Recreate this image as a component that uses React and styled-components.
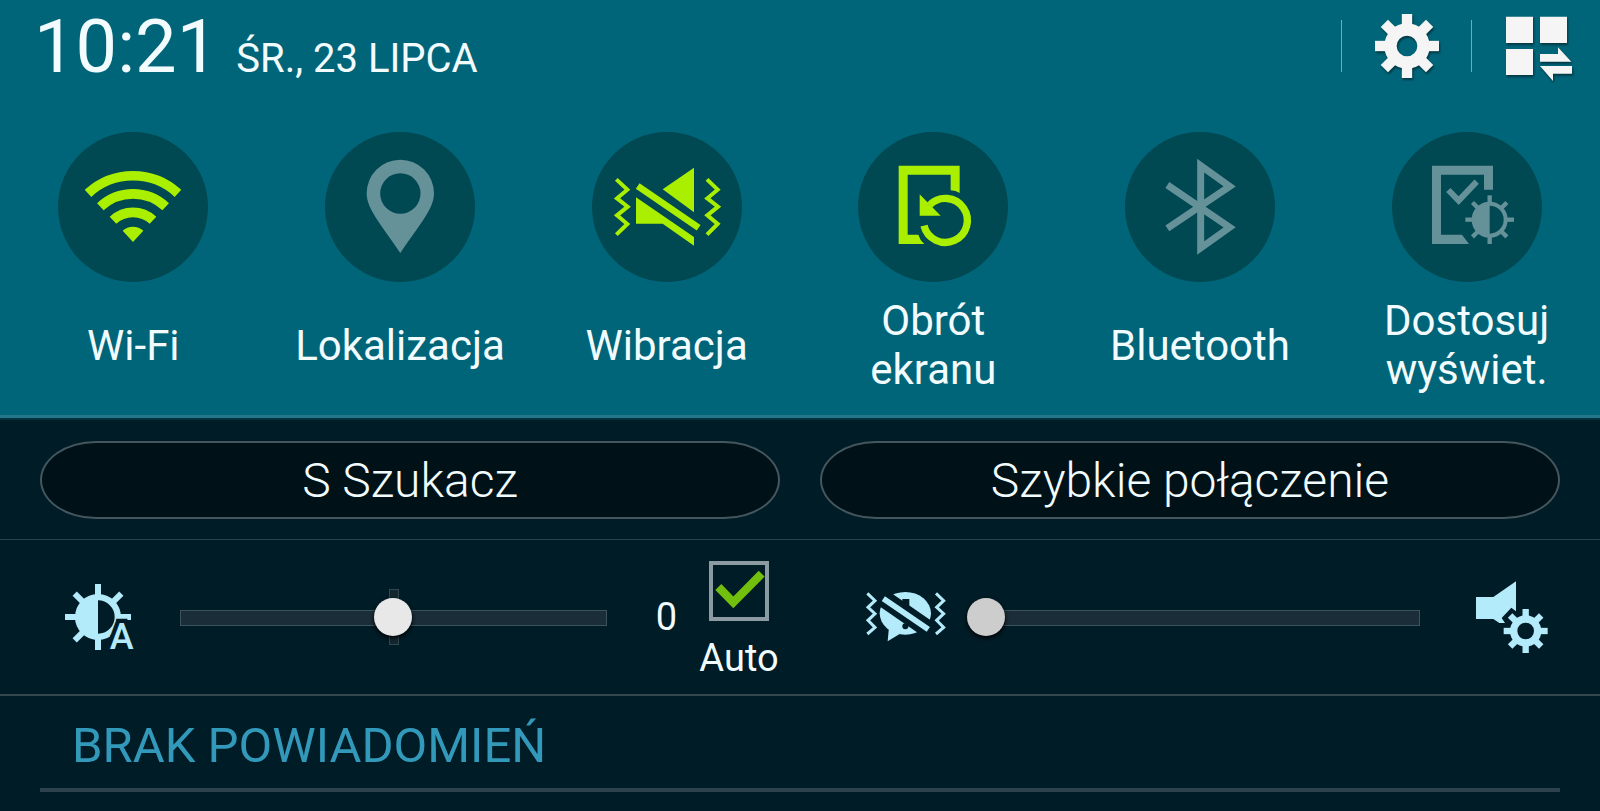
import React, { useState } from "react";
import styled, { createGlobalStyle } from "styled-components";

const GlobalStyle = createGlobalStyle`
  * {
    box-sizing: border-box;
  }
  body {
    margin: 0;
    background: #001c27;
    font-family: Roboto, "Noto Sans", sans-serif;
    color: #f2fbfd;
  }
  button {
    padding: 0;
    border: 0;
    background: none;
    color: inherit;
    font: inherit;
    cursor: pointer;
  }
  svg {
    display: block;
    overflow: visible;
  }
`;

const TopPanel = styled.section`
  background: #006579;
  border-bottom: 3px solid #25788a;
`;

const Header = styled.header`
  display: flex;
  align-items: center;
  height: 92px;
  padding: 0 29px 0 34px;
`;

const Clock = styled.div`
  display: flex;
  flex: 1;
  align-items: baseline;
  gap: 18px;
`;

const Time = styled.time`
  font-size: 74px;
`;

const DateText = styled.span`
  font-size: 40px;
`;

const HeaderButton = styled.button`
  display: flex;
  justify-content: center;
  align-items: center;
  width: ${(props) => (props.$last ? "100px" : "130px")};
  height: 52px;
  padding-left: ${(props) => (props.$last ? "34px" : "0")};
  border-left: 1px solid #7aa9b3;

  svg {
    flex-shrink: 0;
    fill: #f5f5f5;
    filter: drop-shadow(1px 2px 1px rgba(0, 0, 0, 0.45));
  }
`;

const Tiles = styled.div`
  display: grid;
  grid-template-columns: repeat(6, 1fr);
  padding: 40px 0 21px;
`;

const Tile = styled.button`
  display: flex;
  flex-direction: column;
  align-items: center;
  gap: 14px;
`;

const TileIcon = styled.span`
  width: 150px;
  height: 150px;
  border-radius: 50%;
  background: #004852;
  color: ${(props) => (props.$on ? "#aaee00" : "#659199")};
`;

const TileLabel = styled.span`
  display: flex;
  align-items: center;
  max-width: 220px;
  height: 98px;
  font-size: 42px;
  line-height: 49px;
  text-align: center;
`;

const Shortcuts = styled.section`
  display: grid;
  grid-template-columns: 1fr 1fr;
  gap: 40px;
  padding: 21px 40px 20px;
  border-top: 2px solid #00333f;
  border-bottom: 1px solid #2b434c;
`;

const Shortcut = styled.button`
  && {
    height: 78px;
    border: 2px solid #44575e;
    border-radius: 56px / 39px;
    background: #001218;
    font-size: 48px;
    font-weight: 300;
  }
`;

const Controls = styled.section`
  display: grid;
  grid-template-columns: 1fr 1fr;
  min-height: 154px;
`;

const Control = styled.div`
  display: flex;
  align-items: center;
  color: #b4ebfb;

  svg {
    flex-shrink: 0;
  }
`;

const Brightness = styled(Control)`
  padding: 0 13px 0 65px;
`;

const Volume = styled(Control)`
  padding: 0 52px 0 66px;
`;

const SliderBox = styled.div`
  position: relative;
  flex: 1;
  display: flex;
  align-items: center;
  height: 54px;
  margin: ${(props) => props.$margin};

  /* centre tick */
  &::before {
    content: "";
    display: ${(props) => (props.$tick ? "block" : "none")};
    position: absolute;
    left: calc(50% - 4px);
    width: 8px;
    height: 54px;
    border: 1px solid #30474f;
    background: #14272f;
  }

  /* track */
  &::after {
    content: "";
    position: absolute;
    top: 20px;
    right: 0;
    left: ${(props) => (props.$tick ? "0" : "19px")};
    height: 14px;
    border: 1px solid #3b545b;
    background: #1b2d38;
  }
`;

const Slider = styled.input`
  appearance: none;
  position: relative;
  z-index: 1;
  width: 100%;
  height: 38px;
  margin: 0;
  background: transparent;

  &::-webkit-slider-thumb {
    appearance: none;
    width: 38px;
    height: 38px;
    border-radius: 50%;
    background: ${(props) => props.$thumb};
    box-shadow: 0 2px 4px #000;
  }
`;

const Level = styled.output`
  margin-right: 14px;
  color: #f2fbfd;
  font-size: 38px;
`;

const AutoField = styled.label`
  display: flex;
  flex-direction: column;
  align-items: center;
  gap: 18px;
  width: 96px;
  padding-top: 3px;
  color: #f2fbfd;
  font-size: 38px;
  line-height: 38px;
`;

const CheckStack = styled.span`
  display: grid;

  > * {
    grid-area: 1 / 1;
  }
  svg {
    pointer-events: none;
  }
`;

const Checkbox = styled.input`
  appearance: none;
  width: 60px;
  height: 60px;
  margin: 0;
  border: 4px solid #8c9ba1;
`;

const Notice = styled.h2`
  margin: 0 40px;
  padding: 22px 32px 14px;
  border-bottom: 4px solid #2c424c;
  color: #3299ba;
  font-size: 49px;
  font-weight: 400;
  line-height: 56px;
`;

const Divider = styled.hr`
  height: 2px;
  margin: 0;
  border: 0;
  background: #34474f;
`;

const EIGHT = [0, 45, 90, 135, 180, 225, 270, 315];

const Gear = ({ cx, cy, outer, body, hole, tooth }) => (
  <g fill="none" stroke="currentColor">
    <circle cx={cx} cy={cy} r={(body + hole) / 2} strokeWidth={body - hole} />
    {EIGHT.map((angle) => (
      <path
        key={angle}
        d={`M${cx} ${cy - body + 6}V${cy - outer}`}
        strokeWidth={tooth}
        transform={`rotate(${angle} ${cx} ${cy})`}
      />
    ))}
  </g>
);

// Sun with the left half filled
const Sun = ({ cx, cy, outer, body, ring, ray, angles = EIGHT }) => (
  <g fill="none" stroke="currentColor">
    <circle cx={cx} cy={cy} r={body - ring / 2} strokeWidth={ring} />
    <path
      d={`M${cx} ${cy - body + 2}A${body - 2} ${body - 2} 0 0 0 ${cx} ${cy + body - 2}Z`}
      fill="currentColor"
      stroke="none"
    />
    {angles.map((angle) => (
      <path
        key={angle}
        d={`M${cx} ${cy - body + 4}V${cy - outer}`}
        strokeWidth={ray}
        transform={`rotate(${angle} ${cx} ${cy})`}
      />
    ))}
  </g>
);

const SettingsIcon = () => (
  <svg width="64" height="64" viewBox="0 0 192 192" color="#f5f5f5">
    <Gear cx={96} cy={96} outer={96} body={68} hole={31} tooth={31} />
  </svg>
);

const QuickPanelIcon = () => (
  <svg width="66" height="70" viewBox="558 33 198 210">
    <path d="M558 50h81v79h-81zM660 50h81v79h-81zM558 147h81v78h-81z" />
    <path d="M660 162H714V142L754 185H660zM660 198H756V221H699V243z" />
  </svg>
);

const WifiIcon = () => (
  <svg viewBox="54 37 450 450" fill="none" stroke="currentColor" strokeWidth="29">
    <path d="M144 221A199 199 0 0 1 414 221" />
    <path d="M181 261A144 144 0 0 1 377 261" />
    <path d="M219 302A88 88 0 0 1 339 302" />
    <path d="M248 333A46 46 0 0 1 310 333L279 367Z" fill="currentColor" stroke="none" />
  </svg>
);

const LocationIcon = () => (
  <svg viewBox="856 37 450 450" fill="currentColor" fillRule="evenodd">
    <path d="M1082 400C1020 310 981 266 981 221A101 101 0 0 1 1183 221C1183 266 1144 310 1082 400ZM1082 161A60 60 0 1 0 1082 282A60 60 0 1 0 1082 161Z" />
  </svg>
);

const VibrateIcon = () => (
  <svg viewBox="66 37 450 450" fill="currentColor">
    <path
      d="M139 179L172 210L141 236L173 261L141 287L172 313L139 345M411 179L443 210L412 236L444 261L412 287L443 313L411 345"
      fill="none"
      stroke="currentColor"
      strokeWidth="12"
    />
    <path d="M203 199L386 324" stroke="currentColor" strokeWidth="20" />
    <path d="M278 209L372 144V278ZM198 233L372 352V378L278 312H198Z" />
  </svg>
);

const RotateIcon = () => (
  <svg viewBox="865 37 450 450" fill="currentColor">
    <path d="M1170 138H987V373H1064Q1050 360 1046 345H1014V165H1143V212Q1158 213 1170 220Z" />
    <path
      d="M1063 318A66 66 0 1 0 1080 256"
      fill="none"
      stroke="currentColor"
      strokeWidth="22"
    />
    <path d="M1050 224V288H1113Z" />
  </svg>
);

const BluetoothIcon = () => (
  <svg viewBox="77 37 450 450" fill="none" stroke="currentColor" strokeWidth="21">
    <path d="M204 326L391 200L304 138V385L391 323L204 196" strokeMiterlimit="6" />
  </svg>
);

const AdaptIcon = () => (
  <svg viewBox="876 37 450 450" fill="currentColor">
    <path d="M1179 138H996V373H1107L1086 345H1023V165H1152V210H1179Z" />
    <path
      d="M1045 211L1076 243L1130 186"
      fill="none"
      stroke="currentColor"
      strokeWidth="18"
    />
    <Sun cx={1169} cy={300} outer={73} body={54} ring={12} ray={13} />
  </svg>
);

const BrightnessIcon = () => (
  <svg width="69" height="66" viewBox="195 132 207 198">
    <Sun
      cx={294}
      cy={231}
      outer={99}
      body={69}
      ring={19}
      ray={18}
      angles={[0, 45, 90, 180, 225, 270, 315]}
    />
    <text
      x="365"
      y="327"
      textAnchor="middle"
      fontSize="108"
      fontWeight="500"
      fill="currentColor"
      stroke="#001c27"
      strokeWidth="26"
      paintOrder="stroke"
    >
      A
    </text>
  </svg>
);

const NotifyVibrateIcon = () => (
  <svg width="80" height="50" viewBox="79 96 240 150">
    <g fill="currentColor">
      <ellipse cx="197" cy="160" rx="77" ry="64" />
      <path d="M148 200L144 244L180 222Z" />
    </g>
    <g fill="#001c27">
      <path d="M188 117H209V150H188Z" />
      <circle cx="197" cy="199" r="9" />
    </g>
    <path d="M118 106L285 221" stroke="#001c27" strokeWidth="53" />
    <g fill="none" stroke="currentColor">
      <path d="M131 116L266 208" strokeWidth="17" />
      <path
        d="M83 100L106 122L85 142L106 161L85 181L106 202L83 222M289 100L312 122L291 142L312 161L291 181L312 202L289 222"
        strokeWidth="9"
      />
    </g>
  </svg>
);

const SoundSettingsIcon = () => (
  <svg width="72" height="72" viewBox="288 63 216 216">
    <path
      d="M288 111H340L408 64V154L394 143L365 174L375 189H358L340 177H288Z"
      fill="currentColor"
    />
    <Gear cx={437} cy={213} outer={66} body={47} hole={25} tooth={19} />
  </svg>
);

const TILES = [
  { id: "wifi", label: "Wi-Fi", Icon: WifiIcon, on: true },
  { id: "location", label: "Lokalizacja", Icon: LocationIcon, on: false },
  { id: "vibrate", label: "Wibracja", Icon: VibrateIcon, on: true },
  { id: "rotate", label: "Obrót ekranu", Icon: RotateIcon, on: true },
  { id: "bluetooth", label: "Bluetooth", Icon: BluetoothIcon, on: false },
  { id: "adapt", label: "Dostosuj wyświet.", Icon: AdaptIcon, on: false },
];

const App = () => {
  const [enabled, setEnabled] = useState(
    Object.fromEntries(TILES.map(({ id, on }) => [id, on]))
  );
  const [brightness, setBrightness] = useState(0);
  const [volume, setVolume] = useState(0);
  const [auto, setAuto] = useState(true);

  const toggle = (id) => setEnabled({ ...enabled, [id]: !enabled[id] });

  return (
    <main>
      <GlobalStyle />
      <TopPanel>
        <Header>
          <Clock>
            <Time>10:21</Time>
            <DateText>ŚR., 23 LIPCA</DateText>
          </Clock>
          <HeaderButton aria-label="Ustawienia">
            <SettingsIcon />
          </HeaderButton>
          <HeaderButton $last aria-label="Szybkie ustawienia">
            <QuickPanelIcon />
          </HeaderButton>
        </Header>
        <Tiles>
          {TILES.map(({ id, label, Icon }) => (
            <Tile key={id} aria-pressed={enabled[id]} onClick={() => toggle(id)}>
              <TileIcon $on={enabled[id]}>
                <Icon />
              </TileIcon>
              <TileLabel>{label}</TileLabel>
            </Tile>
          ))}
        </Tiles>
      </TopPanel>

      <Shortcuts>
        <Shortcut>S Szukacz</Shortcut>
        <Shortcut>Szybkie połączenie</Shortcut>
      </Shortcuts>

      <Controls>
        <Brightness>
          <BrightnessIcon />
          <SliderBox $tick $margin="0 49px 0 46px">
            <Slider
              type="range"
              aria-label="Jasność"
              min="-5"
              max="5"
              value={brightness}
              onChange={(e) => setBrightness(Number(e.target.value))}
              $thumb="#e8e8e8"
            />
          </SliderBox>
          <Level>{brightness}</Level>
          <AutoField>
            <CheckStack>
              <Checkbox
                type="checkbox"
                checked={auto}
                onChange={(e) => setAuto(e.target.checked)}
              />
              {auto && (
                <svg width="60" height="60" viewBox="1047 60 180 180">
                  <path
                    d="M1075 138L1120 184L1205 98"
                    fill="none"
                    stroke="#73bf0e"
                    strokeWidth="25"
                  />
                </svg>
              )}
            </CheckStack>
            Auto
          </AutoField>
        </Brightness>
        <Volume>
          <NotifyVibrateIcon />
          <SliderBox $margin="0 56px 0 21px">
            <Slider
              type="range"
              aria-label="Głośność powiadomień"
              value={volume}
              onChange={(e) => setVolume(Number(e.target.value))}
              $thumb="#cdcdcd"
            />
          </SliderBox>
          <button aria-label="Ustawienia dźwięku">
            <SoundSettingsIcon />
          </button>
        </Volume>
      </Controls>

      <Divider />
      <Notice>BRAK POWIADOMIEŃ</Notice>
    </main>
  );
};

export default App;
